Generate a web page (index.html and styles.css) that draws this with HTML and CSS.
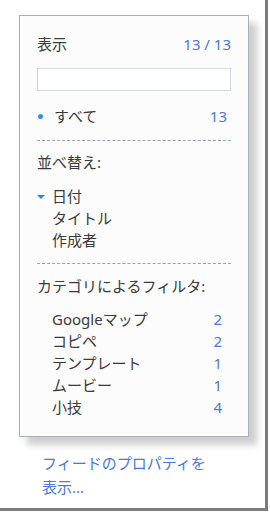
FILE: index.html
```html
<!DOCTYPE html>
<html lang="ja">
<head>
<meta charset="utf-8">
<link rel="stylesheet" href="styles.css">
</head>
<body>
<div class="frame">
  <div class="panel">
    <div class="row head">
      <span>表示</span>
      <span class="blue">13 / 13</span>
    </div>
    <div class="search"></div>
    <div class="row all">
      <span class="bullet"></span>
      <span class="grow">すべて</span>
      <span class="blue">13</span>
    </div>
    <div class="sep"></div>
    <div class="row title sort-title">並べ替え:</div>
    <ul class="sort">
      <li class="active"><span class="tri"></span>日付</li>
      <li>タイトル</li>
      <li>作成者</li>
    </ul>
    <div class="sep"></div>
    <div class="row title cat-title">カテゴリによるフィルタ:</div>
    <ul class="cats">
      <li><span>Googleマップ</span><span class="blue">2</span></li>
      <li><span>コピペ</span><span class="blue">2</span></li>
      <li><span>テンプレート</span><span class="blue">1</span></li>
      <li><span>ムービー</span><span class="blue">1</span></li>
      <li><span>小技</span><span class="blue">4</span></li>
    </ul>
  </div>
  <a class="props" href="#">フィードのプロパティを表示...</a>
</div>
</body>
</html>
```

FILE: styles.css
```css
html, body {
  margin: 0;
  padding: 0;
  background: #ffffff;
}
body {
  font-family: "Noto Sans", "Noto Sans CJK JP", sans-serif;
  font-size: 15px;
  color: #3a3a3a;
}
.frame {
  width: 265px;
  height: 508px;
  border-right: 3px solid #7c7c7c;
  border-bottom: 3px solid #7c7c7c;
  overflow: hidden;
}
.panel {
  margin: 15px 0 0 19px;
  width: 230px;
  height: 422px;
  border: 1px solid #a9afba;
  background: #fcfcfd;
  box-shadow: 8px 8px 7px rgba(0, 0, 0, 0.2);
  padding: 0 17px;
  box-sizing: border-box;
}
.row {
  display: flex;
  align-items: center;
  height: 22px;
  line-height: 22px;
}
.head {
  justify-content: space-between;
  margin-top: 17px;
}
.blue {
  color: #4a78dc;
}
.search {
  margin-top: 13px;
  height: 23px;
  border: 1px solid #d3d7df;
  background: #fff;
  box-sizing: border-box;
}
.all {
  margin-top: 14px;
  padding-right: 4px;
}
.bullet {
  width: 5px;
  height: 5px;
  border-radius: 50%;
  background: #2f95d8;
  margin: 0 11px 0 1px;
}
.grow {
  flex: 1;
}
.sep {
  margin-top: 13px;
  border-top: 1px dashed #95a3b8;
}
.sort-title {
  margin-top: 10px;
}
ul {
  list-style: none;
  margin: 0;
  padding: 0;
}
.sort {
  margin-top: 12px;
}
.sort li {
  display: flex;
  align-items: center;
  height: 22px;
  line-height: 22px;
  padding-left: 15px;
}
.sort li.active {
  padding-left: 0;
}
.tri {
  width: 0;
  height: 0;
  border-left: 4px solid transparent;
  border-right: 4px solid transparent;
  border-top: 4px solid #2f85d0;
  margin: 1px 7px 0 0;
}
.sort + .sep {
  margin-top: 12px;
}
.cat-title {
  margin-top: 11px;
}
.cats {
  margin-top: 11px;
  padding: 0 9px 0 15px;
}
.cats li {
  display: flex;
  justify-content: space-between;
  height: 22px;
  line-height: 22px;
}
.props {
  display: block;
  width: 170px;
  margin: 14px 0 0 42px;
  color: #4a78dc;
  text-decoration: none;
  line-height: 24px;
}
```
